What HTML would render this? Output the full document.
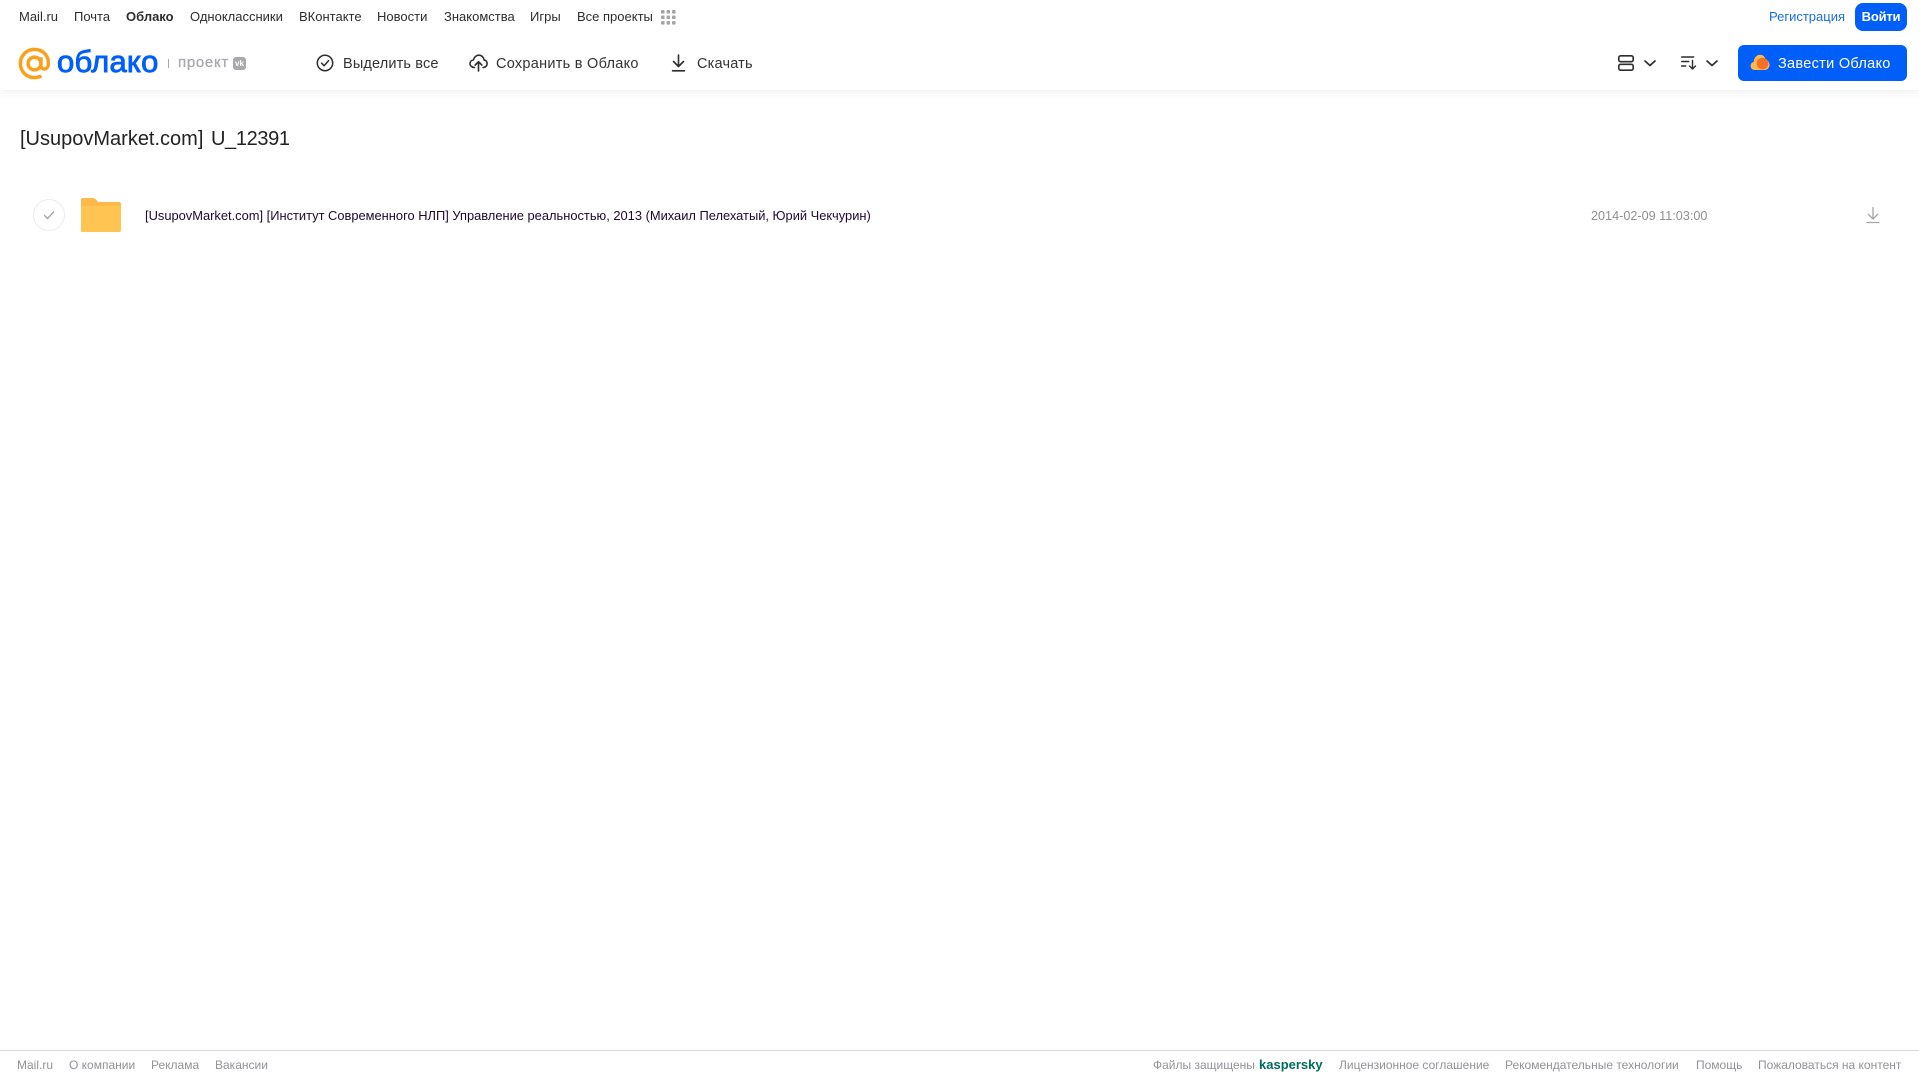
<!DOCTYPE html>
<html lang="ru">
<head>
<meta charset="utf-8">
<title>[UsupovMarket.com] U_12391</title>
<style>
html,body{margin:0;padding:0;background:#fff}
body{width:1919px;height:1079px;position:relative;overflow:hidden;font-family:"Liberation Sans",sans-serif;color:#2c2d2e}
.t{position:absolute;white-space:nowrap;line-height:18px}
.n{top:8px;font-size:13px;color:#2c2d2e}
.a{top:54px;font-size:14.5px;color:#333;letter-spacing:.2px}
.f{top:1056px;font-size:12px;color:#919399}
svg{position:absolute;overflow:visible}
#hd{position:absolute;left:0;top:0;width:1919px;height:90px;background:#fff;box-shadow:0 2px 8px rgba(0,0,0,.07)}
</style>
</head>
<body>
<div id="hd"></div>
<span class="t n" style="left:19px">Mail.ru</span>
<span class="t n" style="left:74px">Почта</span>
<span class="t n" style="left:126px;font-weight:bold">Облако</span>
<span class="t n" style="left:190px">Одноклассники</span>
<span class="t n" style="left:299px">ВКонтакте</span>
<span class="t n" style="left:377px">Новости</span>
<span class="t n" style="left:444px">Знакомства</span>
<span class="t n" style="left:530px">Игры</span>
<span class="t n" style="left:577px">Все проекты</span>
<svg style="left:661px;top:10px" width="15" height="15" fill="#a5a5a5"><rect x="0" y="0" width="3.6" height="3.6" rx="1"/><rect x="5.5" y="0" width="3.6" height="3.6" rx="1"/><rect x="11" y="0" width="3.6" height="3.6" rx="1"/><rect x="0" y="5.5" width="3.6" height="3.6" rx="1"/><rect x="5.5" y="5.5" width="3.6" height="3.6" rx="1"/><rect x="11" y="5.5" width="3.6" height="3.6" rx="1"/><rect x="0" y="11" width="3.6" height="3.6" rx="1"/><rect x="5.5" y="11" width="3.6" height="3.6" rx="1"/><rect x="11" y="11" width="3.6" height="3.6" rx="1"/></svg>

<span class="t" style="left:1769px;top:8px;font-size:13px;color:#1a6fe0">Регистрация</span>
<div style="position:absolute;left:1855px;top:3px;width:52px;height:28px;background:#005ff9;border-radius:8px;color:#fff;font-size:13px;font-weight:bold;line-height:28px;text-align:center;letter-spacing:-.2px">Войти</div>

<svg style="left:18px;top:47px" width="33" height="33" viewBox="0 0 34 34" fill="none" stroke="#f9a11b" stroke-width="3.6"><circle cx="17" cy="17" r="6.6"/><path d="M23.6 10.5V19c0 5 6.8 5 7.6-.5C32.3 9.5 26 2.4 17 2.4 8.8 2.4 2.4 9 2.4 17S8.8 31.6 17 31.6c2.800 0 5-.6 7-1.800"/></svg>
<span class="t" style="left:57px;top:44px;font-size:31px;line-height:36px;color:#005ff9;-webkit-text-stroke:.9px #005ff9;letter-spacing:.25px">облако</span>
<div style="position:absolute;left:168px;top:59px;width:1px;height:9px;background:#aaa"></div>
<span class="t" style="left:178px;top:54px;font-size:15px;color:#a8a9ad;-webkit-text-stroke:.3px #a8a9ad;letter-spacing:.7px">проект</span>
<div style="position:absolute;left:233px;top:57px;width:13px;height:13px;border-radius:3px;background:#a8a9ad;color:#fff;font-size:8px;font-weight:bold;line-height:13px;text-align:center">vk</div>

<svg style="left:316px;top:54px" width="18" height="18" viewBox="0 0 18 18" fill="none" stroke="#2c2d2e" stroke-width="1.5"><circle cx="9" cy="9" r="7.7"/><path d="M5.6 9.2l2.5 2.5 4.4-5" stroke-linecap="round" stroke-linejoin="round"/></svg>
<span class="t a" style="left:343px;top:55px;letter-spacing:.15px">Выделить все</span>
<svg style="left:469px;top:54px" width="19" height="18" viewBox="0 0 19 18" fill="none" stroke="#2c2d2e" stroke-width="1.6" stroke-linecap="round" stroke-linejoin="round"><path d="M5.500 13.500C2.800 13.500 1 11.800 1 9.700c0-2 1.500-3.500 3.400-3.700C5 3.200 7.200 1.200 9.800 1.200c2.800 0 5 2 5.300 4.700 1.800.3 3 1.800 3 3.700 0 2.200-1.700 3.900-4 3.900"/><path d="M9.500 17V8M6.200 11l3.300-3.300 3.300 3.300"/></svg>
<span class="t a" style="left:496px;top:55px;letter-spacing:.27px">Сохранить в Облако</span>
<svg style="left:671px;top:54px" width="15" height="18" viewBox="0 0 15 18" fill="none" stroke="#2c2d2e" stroke-width="1.6" stroke-linecap="round" stroke-linejoin="round"><path d="M7.500 1v11.500M2.500 7.500l5 5 5-5M1.500 16.800h12"/></svg>
<span class="t a" style="left:697px;top:55px">Скачать</span>

<svg style="left:1618px;top:55px" width="16" height="16" viewBox="0 0 16 16" fill="none" stroke="#2c2d2e" stroke-width="1.6"><rect x=".8" y=".8" width="14.400" height="5.900" rx="1.800"/><rect x=".8" y="9.300" width="14.400" height="5.900" rx="1.800"/></svg>
<svg style="left:1644px;top:60px" width="12" height="7" viewBox="0 0 12 7" fill="none" stroke="#2c2d2e" stroke-width="1.700" stroke-linecap="round" stroke-linejoin="round"><path d="M1 1l5 4.500L11 1"/></svg>
<svg style="left:1681px;top:56px" width="16" height="14" viewBox="0 0 16 14" fill="none" stroke="#2c2d2e" stroke-width="1.400" stroke-linecap="round" stroke-linejoin="round"><path d="M.7 1h12M.7 5.500h7M.7 10h4M11.500 4.500v8.500M8.500 10l3 3 3-3"/></svg>
<svg style="left:1706px;top:60px" width="12" height="7" viewBox="0 0 12 7" fill="none" stroke="#2c2d2e" stroke-width="1.700" stroke-linecap="round" stroke-linejoin="round"><path d="M1 1l5 4.500L11 1"/></svg>

<div style="position:absolute;left:1738px;top:45px;width:169px;height:36px;background:#005ff9;border-radius:6px"></div>
<svg style="left:1750px;top:54px" width="20" height="17" viewBox="0 0 20 17"><path fill="#fdb94a" d="M5 16C2 16 .6 14 .6 11.800.6 9.800 2 8.300 3.700 8 4 3.500 7 .8 10 .8c3 0 5 2 5.500 4.700C18 6 19.500 8.500 19.500 11c0 3-2.300 5-5 5z"/><circle cx="12.500" cy="9.500" r="5.800" fill="#f4702a"/></svg>
<span class="t" style="left:1778px;top:55px;font-size:14.500px;color:#fff;letter-spacing:.3px">Завести Облако</span>

<span class="t" style="left:20px;top:127px;font-size:20px;line-height:24px;color:#222;word-spacing:2px">[UsupovMarket.com] <span style="letter-spacing:-.35px">U_12391</span></span>

<svg style="left:33px;top:199px" width="32" height="32" viewBox="0 0 32 32" fill="none"><circle cx="16" cy="16" r="15.500" stroke="#ececec"/><path d="M11.500 16.500l3 3 6-6.500" stroke="#a0a0a0" stroke-width="1.300" stroke-linecap="round" stroke-linejoin="round"/></svg>
<svg style="left:81px;top:198px" width="40" height="34" viewBox="0 0 40 34"><path fill="#fdb94a" d="M2 0h10c1.500 0 2.200.700 3 1.600L17 4h21c1.200 0 2 .8 2 2v26c0 1.200-.8 2-2 2H2c-1.200 0-2-.8-2-2V2C0 .8.800 0 2 0z"/><path fill="#ffc451" d="M0 8h40V32c0 1.200-.8 2-2 2H2c-1.200 0-2-.8-2-2z"/></svg>
<span class="t" style="left:145px;top:206.500px;font-size:12.890px;color:#1f0a2e">[UsupovMarket.com] [Институт Современного НЛП] Управление реальностью, 2013 (Михаил Пелехатый, Юрий Чекчурин)</span>
<span class="t" style="left:1591px;top:206.500px;font-size:12.650px;color:#8f8f8f">2014-02-09 11:03:00</span>
<svg style="left:1866px;top:206px" width="14" height="18" viewBox="0 0 14 18" fill="none" stroke="#a5a5a5" stroke-width="1.300"><path d="M7 1v12M2 8l5 5 5-5M.5 16.500h13"/></svg>

<div style="position:absolute;left:0;top:1050px;width:1919px;height:1px;background:#d8d8d8"></div>
<span class="t f" style="left:17px">Mail.ru</span>
<span class="t f" style="left:69px">О компании</span>
<span class="t f" style="left:151px">Реклама</span>
<span class="t f" style="left:215px">Вакансии</span>
<span class="t f" style="left:1153px">Файлы защищены</span>
<span class="t" style="left:1259px;top:1056px;font-size:13px;font-weight:bold;color:#006d5c">kaspersky</span>
<span class="t f" style="left:1339px">Лицензионное соглашение</span>
<span class="t f" style="left:1505px">Рекомендательные технологии</span>
<span class="t f" style="left:1696px">Помощь</span>
<span class="t f" style="left:1758px">Пожаловаться на контент</span>
</body>
</html>
